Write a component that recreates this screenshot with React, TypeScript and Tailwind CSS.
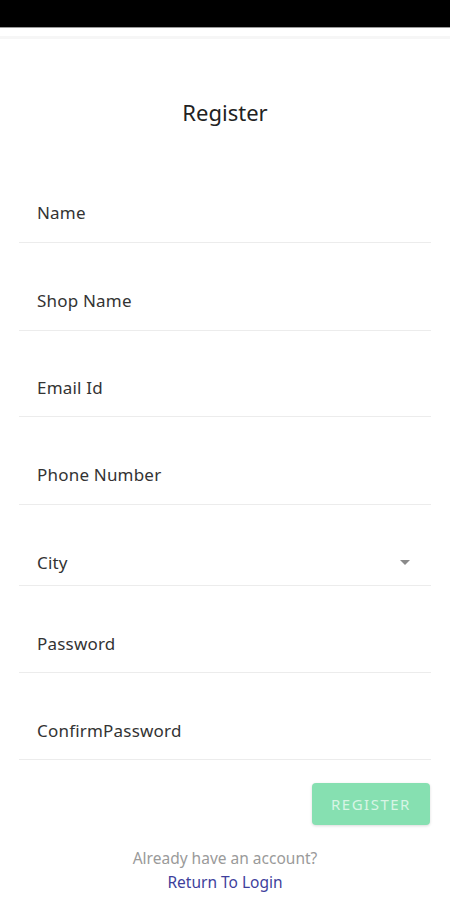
import React from "react";

const rows: { label: string; h: number; pb: number; select?: boolean }[] = [
  { label: "Name", h: 87, pb: 17 },
  { label: "Shop Name", h: 88, pb: 17 },
  { label: "Email Id", h: 86, pb: 16 },
  { label: "Phone Number", h: 88, pb: 17 },
  { label: "City", h: 81, pb: 10, select: true },
  { label: "Password", h: 87, pb: 16 },
  { label: "ConfirmPassword", h: 87, pb: 16 },
];

export default function App() {
  return (
    <div
      className="w-[450px] h-[900px] bg-white overflow-hidden flex flex-col"
      style={{ fontFamily: '"Noto Sans", "Open Sans", sans-serif' }}
    >
      <div className="h-[27px] bg-black shrink-0" />
      <div className="h-[1px] bg-[#9a9a9a] shrink-0" />
      <div className="h-[8px] shrink-0" />
      <div className="h-[3px] bg-[#f6f6f6] shrink-0" />
      <div className="pt-[58px] text-center text-[22px] leading-[30px] text-[#222]">
        Register
      </div>
      <div className="px-[19px] pt-[29px]">
        {rows.map((r, i) => (
          <div
            key={i}
            className="flex items-end border-b border-[#ececec] px-[18px]"
            style={{ height: r.h, paddingBottom: r.pb }}
          >
            <span className="text-[17px] leading-[24px] tracking-[0.2px] text-[#333] flex-1">
              {r.label}
            </span>
            {r.select && (
              <svg width="10" height="5" viewBox="0 0 10 5" className="mb-[10px] mr-[3px]">
                <path d="M0 0 L10 0 L5 5 Z" fill="#8a8a8a" />
              </svg>
            )}
          </div>
        ))}
        <div className="flex justify-end pt-[23px] pr-[1px]">
          <div className="w-[118px] h-[42px] rounded-[4px] bg-[#86e0b1] shadow-[0_1px_3px_rgba(0,0,0,0.15)] flex items-center justify-center text-[15px] tracking-[1.5px] text-[#d8f5e5]">
            REGISTER
          </div>
        </div>
      </div>
      <div className="text-center pt-[23px] text-[15.5px] leading-[20px] text-[#9a9a9a]">
        Already have an account?
      </div>
      <div className="text-center pt-[4px] text-[15.5px] leading-[20px] text-[#3e3f9c]">
        Return To Login
      </div>
    </div>
  );
}
